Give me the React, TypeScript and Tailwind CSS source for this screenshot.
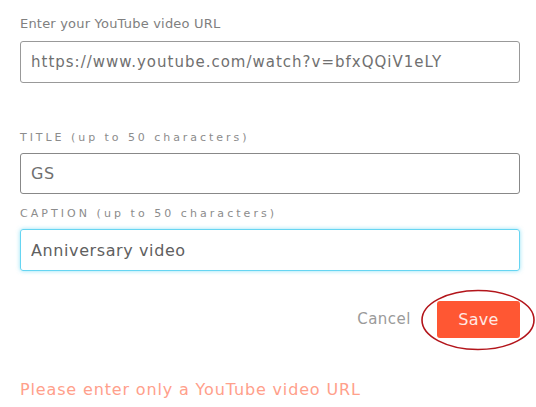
import { useState } from 'react'

const FONT = { fontFamily: "'DejaVu Sans', 'Noto Sans', sans-serif" }

export default function App() {
  const [url, setUrl] = useState('https://www.youtube.com/watch?v=bfxQQiV1eLY')
  const [title, setTitle] = useState('GS')
  const [caption, setCaption] = useState('Anniversary video')

  return (
    <main className="w-[536px] h-[407px] bg-white pl-5 pr-4 pt-[15px]" style={FONT}>
      <label className="block text-[13px] leading-[18px] text-[#808080] tracking-[0.2px]">
        Enter your YouTube video URL
      </label>
      <input
        value={url}
        onChange={(e) => setUrl(e.target.value)}
        className="mt-[8px] block w-full h-[42px] border border-[#999] rounded-[3px] px-[10px] text-[15px] text-[#707070] tracking-[1px] outline-none"
      />

      <label className="block mt-[47px] text-[11px] leading-[16px] text-[#8c8c8c] uppercase tracking-[2.95px]">
        Title <span className="normal-case">(up to 50 characters)</span>
      </label>
      <input
        value={title}
        onChange={(e) => setTitle(e.target.value)}
        className="mt-[7px] block w-full h-[41px] border border-[#888] rounded-[3px] px-[10px] text-[16px] text-[#707070] tracking-[0.6px] outline-none"
      />

      <label className="block mt-[12px] text-[11px] leading-[16px] text-[#8c8c8c] uppercase tracking-[3.05px]">
        Caption <span className="normal-case">(up to 50 characters)</span>
      </label>
      <input
        value={caption}
        onChange={(e) => setCaption(e.target.value)}
        className="mt-[7px] block w-full h-[42px] border border-[#66d5f2] rounded-[3px] px-[10px] text-[16px] text-[#606060] tracking-[0.6px] outline-none shadow-[0_0_4px_rgba(102,213,242,0.7)]"
      />

      <div className="mt-[30px] flex items-center justify-end gap-[26px]">
        <button className="text-[15px] text-[#9a9a9a] tracking-[0.5px]">Cancel</button>
        <div className="relative">
          <button className="w-[83px] h-[37px] bg-[#ff5733] rounded-[3px] text-[16px] text-[#ffe9e3] tracking-[0.3px]">
            Save
          </button>
          {/* hand-drawn highlight round the button */}
          <svg
            className="absolute left-[-16px] top-[-12px] pointer-events-none"
            width="116"
            height="62"
            viewBox="0 0 116 62"
          >
            <ellipse cx="57" cy="31" rx="56" ry="29.5" fill="none" stroke="#b3151b" strokeWidth="1.6" />
          </svg>
        </div>
      </div>

      <p className="mt-[42px] text-[16px] leading-[20px] text-[#ffa08b] tracking-[0.85px]">
        Please enter only a YouTube video URL
      </p>
    </main>
  )
}
